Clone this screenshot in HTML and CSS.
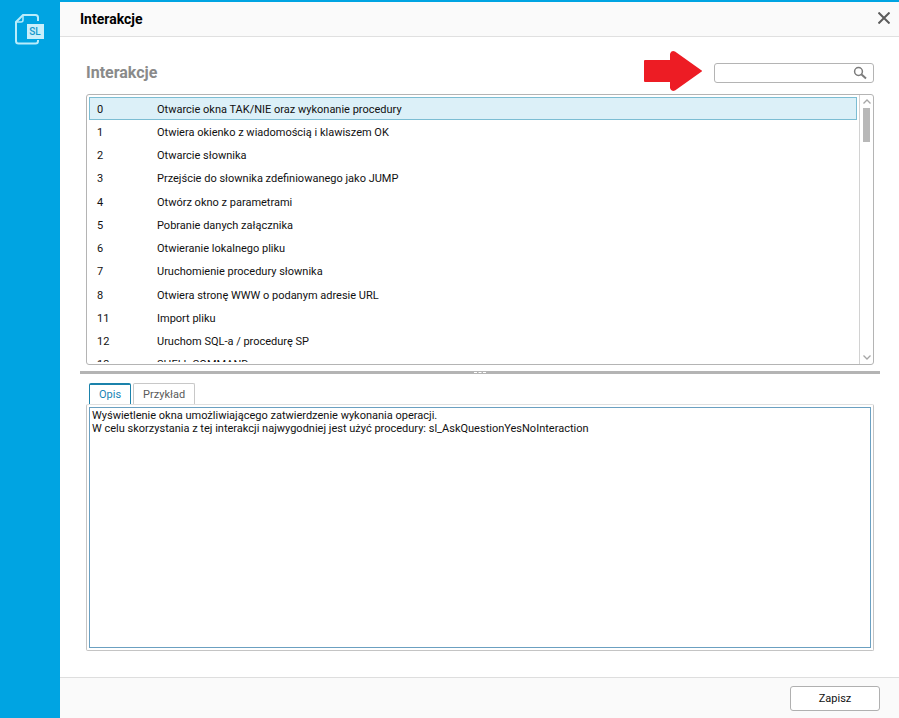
FILE: index.html
```html
<!DOCTYPE html>
<html lang="pl">
<head>
<meta charset="utf-8">
<title>Interakcje</title>
<link rel="stylesheet" href="styles.css">
</head>
<body>
<div class="app">
  <aside class="sidebar">
    <svg class="logo" width="32" height="32" viewBox="0 0 32 32" aria-hidden="true">
      <path d="M24 7V3.500Q24 1 21.500 1H9L2 8V27Q2 29.500 4.500 29.500H21.500Q24 29.500 24 27V26" fill="none" stroke="#b9ecfb" stroke-width="2"/>
      <path d="M9 1V6Q9 8 7 8H2" fill="none" stroke="#b9ecfb" stroke-width="1.500"/>
      <rect x="13" y="10" width="17" height="15" fill="#c9effb"/>
      <text class="logo-text" x="21" y="21" text-anchor="middle">SL</text>
    </svg>
  </aside>
  <div class="window">
    <header class="titlebar">
      <h1 class="title">Interakcje</h1>
      <button class="close" type="button" aria-label="Zamknij">
        <svg width="12" height="12" viewBox="0 0 12 12"><path d="M.5 .5L11.500 11.500M11.500 .5L.5 11.500" fill="none" stroke="#5c5c5c" stroke-width="2"/></svg>
      </button>
    </header>
    <main class="content">
      <div class="toolbar">
        <h2 class="heading">Interakcje</h2>
        <svg class="arrow" width="60" height="42" viewBox="0 1 60 42" aria-hidden="true">
          <path d="M2 10H27V4Q28 0 32 1.500L58 20Q60 21 58 22L32 40.500Q28 42 27 38V32H2Q1 32 1 31V11Q1 10 2 10Z" fill="#ed1c24"/>
        </svg>
        <div class="search">
          <input class="search-input" type="text" aria-label="Szukaj">
          <svg width="14" height="14" viewBox="0 0 14 14" aria-hidden="true"><circle cx="5.500" cy="5.500" r="3.900" fill="none" stroke="#7b7b7b" stroke-width="1.500"/><path d="M8.300 8.300L13 12.500" stroke="#7b7b7b" stroke-width="2"/></svg>
        </div>
      </div>
      <div class="list">
        <div class="list-view">
          <table class="rows">
            <tbody>
              <tr class="selected"><td class="num">0</td><td>Otwarcie okna TAK/NIE oraz wykonanie procedury</td></tr>
              <tr><td class="num">1</td><td>Otwiera okienko z wiadomością i klawiszem OK</td></tr>
              <tr><td class="num">2</td><td>Otwarcie słownika</td></tr>
              <tr><td class="num">3</td><td>Przejście do słownika zdefiniowanego jako JUMP</td></tr>
              <tr><td class="num">4</td><td>Otwórz okno z parametrami</td></tr>
              <tr><td class="num">5</td><td>Pobranie danych załącznika</td></tr>
              <tr><td class="num">6</td><td>Otwieranie lokalnego pliku</td></tr>
              <tr><td class="num">7</td><td>Uruchomienie procedury słownika</td></tr>
              <tr><td class="num">8</td><td>Otwiera stronę WWW o podanym adresie URL</td></tr>
              <tr><td class="num">11</td><td>Import pliku</td></tr>
              <tr><td class="num">12</td><td>Uruchom SQL-a / procedurę SP</td></tr>
              <tr><td class="num">13</td><td>SHELL COMMAND</td></tr>
            </tbody>
          </table>
        </div>
        <div class="scrollbar" aria-hidden="true">
          <svg width="8" height="5" viewBox="0 0 8 5"><path d="M.5 4.500L4 1L7.500 4.500" fill="none" stroke="#a6a6a6" stroke-width="1.300"/></svg>
          <div class="track"><div class="thumb"></div></div>
          <svg width="8" height="5" viewBox="0 0 8 5"><path d="M.5 .5L4 4L7.500 .5" fill="none" stroke="#a6a6a6" stroke-width="1.300"/></svg>
        </div>
      </div>
      <div class="splitter" role="separator"><span class="grip"></span></div>
      <div class="tabs" role="tablist">
        <button class="tab active" type="button" role="tab" aria-selected="true">Opis</button>
        <button class="tab" type="button" role="tab" aria-selected="false">Przykład</button>
      </div>
      <div class="panel" role="tabpanel">
        <textarea class="description" aria-label="Opis">Wyświetlenie okna umożliwiającego zatwierdzenie wykonania operacji.
W celu skorzystania z tej interakcji najwygodniej jest użyć procedury: sl_AskQuestionYesNoInteraction</textarea>
      </div>
    </main>
    <footer class="footer">
      <button class="save" type="button">Zapisz</button>
    </footer>
  </div>
</div>
</body>
</html>
```
FILE: styles.css
```css
* { box-sizing: border-box; }
body {
  margin: 0;
  font-family: Roboto, "Liberation Sans", sans-serif;
  font-size: 11px;
  color: #111;
  background: #fff;
}
button, input, textarea { font: inherit; color: inherit; }
.app { display: flex; min-height: 100vh; background: #00a4e2; }
.sidebar { width: 60px; flex: none; padding: 14px; }
.logo { display: block; }
.logo-text { font-size: 10px; font-weight: 500; fill: #1598cb; }
.window {
  flex: 1;
  min-width: 0;
  display: flex;
  flex-direction: column;
  margin-top: 2px;
  background: #fff;
}
.titlebar {
  display: flex;
  align-items: center;
  justify-content: space-between;
  height: 35px;
  padding: 0 8px 0 20px;
  background: #fafafa;
  border-bottom: 1px solid #e0e0e0;
}
.title { margin: 0; font-size: 14px; font-weight: 700; line-height: 16px; color: #000; }
.close { display: flex; padding: 0 1px 2px; border: 0; background: none; }
.content {
  flex: 1;
  display: flex;
  flex-direction: column;
  padding: 14px 25px 26px 26px;
}
.toolbar { display: flex; align-items: center; height: 43px; }
.heading { flex: 1; margin: 0; font-size: 16px; font-weight: 700; color: #8a8a8a; }
.arrow { align-self: flex-start; margin-right: 11px; }
.search {
  display: flex;
  align-items: center;
  width: 160px;
  height: 20px;
  padding-right: 6px;
  border: 1px solid #b4b4b4;
  border-radius: 3px;
  background: #fff;
}
.search-input { flex: 1; min-width: 0; padding: 0 4px; border: 0; outline: 0; background: none; }
.list {
  display: flex;
  height: 271px;
  border: 1px solid #b4b4b4;
  border-radius: 3px;
}
.list-view { flex: 1; height: 267px; padding: 2px 2px 0; overflow: hidden; }
.rows { width: 100%; height: 279px; border-collapse: separate; border-spacing: 0; }
.rows td { padding: 1px 0 0 8px; vertical-align: middle; white-space: nowrap; }
.rows .num { width: 60px; }
.selected { background: #dcf0f8; box-shadow: inset 0 0 0 1px #7cbdd3; }
.scrollbar {
  display: flex;
  flex-direction: column;
  align-items: center;
  width: 14px;
  padding: 4px 0;
  border-left: 1px solid #d2d2d2;
}
.track { flex: 1; padding-top: 4px; }
.thumb { width: 7px; height: 34px; background: #b8b8b8; }
.splitter {
  display: flex;
  align-items: center;
  justify-content: center;
  height: 3px;
  margin: 6px -6px 9px;
  background: #b4b4b4;
}
.grip { width: 12px; border-top: 1px dashed #fff; }
.tabs { display: flex; gap: 2px; height: 21px; padding-left: 3px; }
.tab {
  padding: 0 9px;
  border: 1px solid #c8c8c8;
  border-bottom: 0;
  border-radius: 2px 2px 0 0;
  background: #fff;
  color: #5a5a5a;
}
.tab.active { padding-bottom: 1px; border-color: #1b82ab; border-top-width: 2px; color: #1783b5; }
.panel {
  flex: 1;
  display: flex;
  padding: 2px;
  border: 1px solid #c4c4c4;
  border-top-color: #e0e0e0;
  border-radius: 2px;
}
.description {
  flex: 1;
  padding: 1px 2px;
  border: 1px solid #6ba0c1;
  outline: 0;
  resize: none;
  line-height: 13px;
  background: #fff;
}
.footer {
  display: flex;
  justify-content: flex-end;
  align-items: center;
  height: 41px;
  padding-right: 19px;
  background: #fafafa;
  border-top: 1px solid #dedede;
}
.save {
  width: 90px;
  height: 25px;
  border: 1px solid #b0b0b0;
  border-radius: 3px;
  background: #fff;
}
```
